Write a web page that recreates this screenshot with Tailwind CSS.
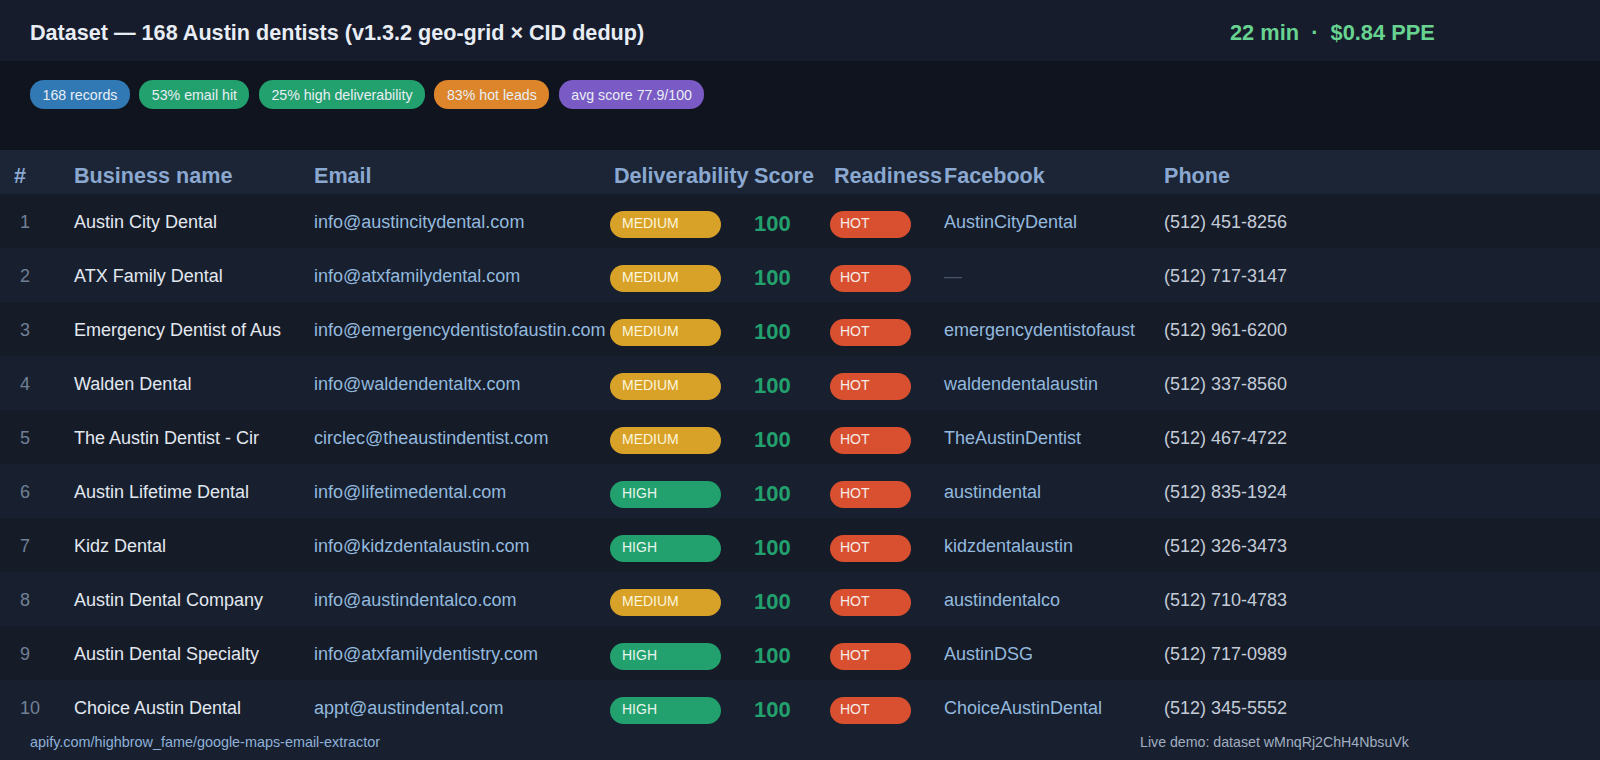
<!DOCTYPE html>
<html lang="en">
<head>
  <meta charset="UTF-8">
  <title>Dataset</title>
  <script src="https://cdn.jsdelivr.net/npm/@tailwindcss/browser@4"></script>
</head>
<body class="bg-[#18202f] font-['Liberation_Sans',Arial,sans-serif] text-[18px] w-[1600px] h-[760px] overflow-hidden relative">
  <!-- Top bar -->
  <div class="h-[61px] bg-[#161c2c] flex items-center pl-[30px] pt-[6px]">
    <div class="text-[21.6px] font-bold text-[#e8edf4] w-[1200px]">Dataset — 168 Austin dentists (v1.3.2 geo-grid × CID dedup)</div>
    <div class="text-[21.8px] font-bold text-[#68d391]">22 min &nbsp;·&nbsp; $0.84 PPE</div>
  </div>
  <!-- Summary chips -->
  <div class="h-[89px] pt-[19px] pl-[30px] flex items-start gap-[9.4px] text-[14.2px] text-[#e8eef5] bg-[#10141f]">
    <span class="h-[29px] pt-[2px] px-[12.5px] flex items-center rounded-[14px] bg-[#3079b5]">168 records</span>
    <span class="h-[29px] pt-[2px] px-[12.5px] flex items-center rounded-[14px] bg-[#22a06d]">53% email hit</span>
    <span class="h-[29px] pt-[2px] px-[12.5px] flex items-center rounded-[14px] bg-[#22a06d]">25% high deliverability</span>
    <span class="h-[29px] pt-[2px] px-[12.5px] flex items-center rounded-[14px] bg-[#dc852b]">83% hot leads</span>
    <span class="h-[29px] pt-[2px] px-[12.5px] flex items-center rounded-[14px] bg-[#7a5ac4]">avg score 77.9/100</span>
  </div>
  <!-- Table header -->
  <div class="h-[44px] pt-[8px] bg-[#1c2536] grid grid-cols-[60px_240px_300px_140px_80px_110px_220px_1fr] items-center text-[21.6px] font-bold text-[#8aa8d0]">
    <div class="pl-[14px]">#</div>
    <div class="pl-[14px]">Business name</div>
    <div class="pl-[14px]">Email</div>
    <div class="pl-[14px]">Deliverability</div>
    <div class="pl-[14px]">Score</div>
    <div class="pl-[14px]">Readiness</div>
    <div class="pl-[14px]">Facebook</div>
    <div class="pl-[14px]">Phone</div>
  </div>
  <!-- Rows -->
  <div id="rows"></div>
  <!-- Footer -->
  <div class="absolute left-[30px] bottom-[6px] text-[14.4px] text-[#8fb0d8]">apify.com/highbrow_fame/google-maps-email-extractor</div>
  <div class="absolute left-[1140px] bottom-[7px] text-[14.2px] text-[#a0aec0]">Live demo: dataset wMnqRj2ChH4NbsuVk</div>

  <script>
    const data = [
      ["Austin City Dental", "info@austincitydental.com", "MEDIUM", "AustinCityDental", "(512) 451-8256"],
      ["ATX Family Dental", "info@atxfamilydental.com", "MEDIUM", "", "(512) 717-3147"],
      ["Emergency Dentist of Aus", "info@emergencydentistofaustin.com", "MEDIUM", "emergencydentistofaust", "(512) 961-6200"],
      ["Walden Dental", "info@waldendentaltx.com", "MEDIUM", "waldendentalaustin", "(512) 337-8560"],
      ["The Austin Dentist - Cir", "circlec@theaustindentist.com", "MEDIUM", "TheAustinDentist", "(512) 467-4722"],
      ["Austin Lifetime Dental", "info@lifetimedental.com", "HIGH", "austindental", "(512) 835-1924"],
      ["Kidz Dental", "info@kidzdentalaustin.com", "HIGH", "kidzdentalaustin", "(512) 326-3473"],
      ["Austin Dental Company", "info@austindentalco.com", "MEDIUM", "austindentalco", "(512) 710-4783"],
      ["Austin Dental Specialty", "info@atxfamilydentistry.com", "HIGH", "AustinDSG", "(512) 717-0989"],
      ["Choice Austin Dental", "appt@austindental.com", "HIGH", "ChoiceAustinDental", "(512) 345-5552"]
    ];

    document.getElementById("rows").innerHTML = data.map(function(r, i) {
      const pill = r[2] === "HIGH" ? "bg-[#22a06d] text-[#e8f5ee]" : "bg-[#d8a128] text-[#fdf6dc]";
      const fb = r[3]
        ? `<div class="pl-[14px] pt-[3px] text-[#93b9de]">${r[3]}</div>`
        : `<div class="pl-[14px] pt-[3px] text-[#4a5568]">—</div>`;
      return `
        <div class="h-[54px] grid grid-cols-[60px_240px_300px_140px_80px_110px_220px_1fr] items-center odd:bg-[#161b28] even:bg-[#18202f]">
          <div class="pl-[20px] pt-[3px] text-[#718096]">${i + 1}</div>
          <div class="pl-[14px] pt-[3px] text-[#e2e8f0]">${r[0]}</div>
          <div class="pl-[14px] pt-[3px] text-[#93b9de]">${r[1]}</div>
          <div class="pl-[10px] pt-[7px]"><span class="w-[111px] h-[27px] pb-[3px] flex items-center pl-[12px] rounded-[14px] text-[14px] ${pill}">${r[2]}</span></div>
          <div class="pl-[14px] pt-[4px] text-[22px] font-bold text-[#22a06d]">100</div>
          <div class="pl-[10px] pt-[7px]"><span class="w-[81px] h-[27px] pb-[3px] flex items-center pl-[10px] rounded-[14px] bg-[#d95030] text-[14px] text-[#f5ece8]">HOT</span></div>
          ${fb}
          <div class="pl-[14px] pt-[3px] text-[#c4ccd8]">${r[4]}</div>
        </div>`;
    }).join("");
  </script>
</body>
</html>
